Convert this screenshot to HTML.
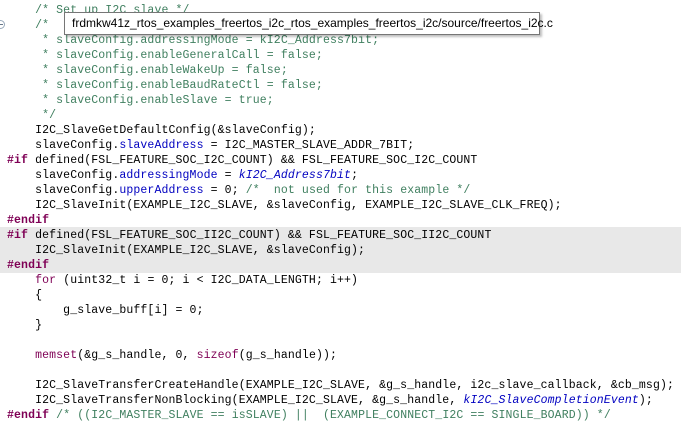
<!DOCTYPE html>
<html><head><meta charset="utf-8"><style>
html,body{margin:0;padding:0;background:#fff;width:681px;height:431px;overflow:hidden;position:relative}
.hl{position:absolute;left:0;top:227px;width:681px;height:46px;background:#e8e8e8}
pre{position:absolute;left:7px;top:3px;margin:0;font-family:"Liberation Mono",monospace;font-size:11.5px;letter-spacing:0.12px;line-height:15px;color:#000}
.c{color:#3f7f5f}.k{color:#7f0055;font-weight:bold}.kn{color:#7f0055}.f{color:#0000c0}.e{color:#0000c0;font-style:italic}
.tip{position:absolute;left:64px;top:12px;width:476px;height:23px;border:1px solid #767676;background:#fff;box-shadow:2px 2px 2px rgba(0,0,0,.25);font-family:"Liberation Sans",sans-serif;font-size:12px;line-height:21px;padding-left:7px;box-sizing:border-box;white-space:nowrap;color:#000}
.g{position:absolute;left:-4px;top:20px;width:9px;height:9px;border:1px solid #9ab;border-radius:50%;box-sizing:border-box}
.g:after{content:"";position:absolute;left:2px;top:3px;width:4px;height:1px;background:#678}
</style></head><body>
<div class="hl"></div>
<div class="g"></div>
<pre><span class="c">    /* Set up I2C slave */</span>
<span class="c">    /*</span>
<span class="c">     * slaveConfig.addressingMode = kI2C_Address7bit;</span>
<span class="c">     * slaveConfig.enableGeneralCall = false;</span>
<span class="c">     * slaveConfig.enableWakeUp = false;</span>
<span class="c">     * slaveConfig.enableBaudRateCtl = false;</span>
<span class="c">     * slaveConfig.enableSlave = true;</span>
<span class="c">     */</span>
    I2C_SlaveGetDefaultConfig(&amp;slaveConfig);
    slaveConfig.<span class="f">slaveAddress</span> = I2C_MASTER_SLAVE_ADDR_7BIT;
<span class="k">#if</span> defined(FSL_FEATURE_SOC_I2C_COUNT) &amp;&amp; FSL_FEATURE_SOC_I2C_COUNT
    slaveConfig.<span class="f">addressingMode</span> = <span class="e">kI2C_Address7bit</span>;
    slaveConfig.<span class="f">upperAddress</span> = 0; <span class="c">/*  not used for this example */</span>
    I2C_SlaveInit(EXAMPLE_I2C_SLAVE, &amp;slaveConfig, EXAMPLE_I2C_SLAVE_CLK_FREQ);
<span class="k">#endif</span>
<span class="k">#if</span> defined(FSL_FEATURE_SOC_II2C_COUNT) &amp;&amp; FSL_FEATURE_SOC_II2C_COUNT
    I2C_SlaveInit(EXAMPLE_I2C_SLAVE, &amp;slaveConfig);
<span class="k">#endif</span>
    <span class="kn">for</span> (uint32_t i = 0; i &lt; I2C_DATA_LENGTH; i++)
    {
        g_slave_buff[i] = 0;
    }

    <span class="kn">memset</span>(&amp;g_s_handle, 0, <span class="kn">sizeof</span>(g_s_handle));

    I2C_SlaveTransferCreateHandle(EXAMPLE_I2C_SLAVE, &amp;g_s_handle, i2c_slave_callback, &amp;cb_msg);
    I2C_SlaveTransferNonBlocking(EXAMPLE_I2C_SLAVE, &amp;g_s_handle, <span class="e">kI2C_SlaveCompletionEvent</span>);
<span class="k">#endif</span> <span class="c">/* ((I2C_MASTER_SLAVE == isSLAVE) ||  (EXAMPLE_CONNECT_I2C == SINGLE_BOARD)) */</span></pre>
<div class="tip">frdmkw41z_rtos_examples_freertos_i2c_rtos_examples_freertos_i2c/source/freertos_i2c.c</div>
</body></html>
